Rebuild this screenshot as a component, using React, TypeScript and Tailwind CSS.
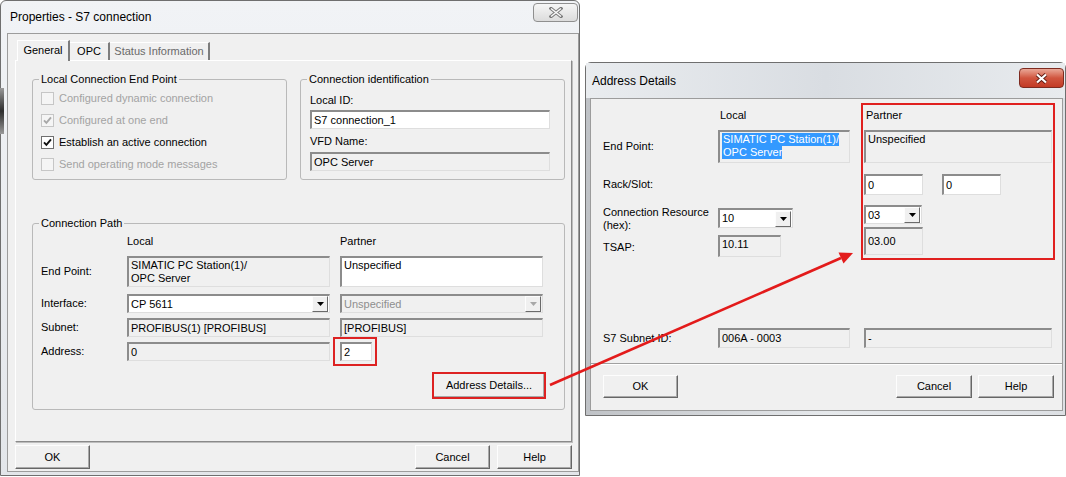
import React from 'react'

type BoxProps = { children?: React.ReactNode; className?: string }

// sunken edit / static field
function Field({ children, className = '', white = false }: BoxProps & { white?: boolean }) {
  return (
    <div
      className={`border-t-2 border-l-2 border-r border-b border-t-[#8c8c8c] border-l-[#8c8c8c] border-r-[#dedede] border-b-[#dedede] pl-[2px] leading-[13px] whitespace-nowrap overflow-hidden ${
        white ? 'bg-white' : 'bg-[#f0f0f0]'
      } ${className}`}
    >
      {children}
    </div>
  )
}

function Btn({ children, className = '' }: BoxProps) {
  return (
    <div
      className={`flex items-center justify-center bg-[#f0f0f0] border border-t-[#fdfdfd] border-l-[#fdfdfd] border-r-[#666666] border-b-[#666666] shadow-[inset_-1px_-1px_0_#a9a9a9] ${className}`}
    >
      {children}
    </div>
  )
}

function DropArrow({ disabled = false }: { disabled?: boolean }) {
  return (
    <div className="w-[16px] h-[16px] shrink-0 flex items-center justify-center bg-[#f0f0f0] border border-t-[#fdfdfd] border-l-[#fdfdfd] border-r-[#6a6a6a] border-b-[#6a6a6a]">
      <svg width="7" height="4" viewBox="0 0 7 4">
        <path d="M0 0H7L3.5 4Z" fill={disabled ? '#a8a8a8' : '#000'} />
      </svg>
    </div>
  )
}

function Combo({ value, className = '', disabled = false }: { value: string; className?: string; disabled?: boolean }) {
  return (
    <Field white={!disabled} className={`flex items-center pr-[1px] ${className}`}>
      <span className={`flex-1 ${disabled ? 'text-[#8e8e8e]' : ''}`}>{value}</span>
      <DropArrow disabled={disabled} />
    </Field>
  )
}

function Check({ label, checked = false, disabled = false }: { label: string; checked?: boolean; disabled?: boolean }) {
  return (
    <div className="flex items-center h-[22px]">
      <span
        className={`w-[13px] h-[13px] border flex items-center justify-center ${
          disabled ? 'border-[#c6c6c6] bg-[#f5f5f5]' : 'border-[#6f6f6f] bg-white'
        }`}
      >
        {checked && (
          <svg width="9" height="9" viewBox="0 0 9 9">
            <path d="M1 4.3L3.4 6.8L8 1.4" fill="none" stroke={disabled ? '#a8a8a8' : '#111'} strokeWidth="1.9" />
          </svg>
        )}
      </span>
      <span className={`ml-[5px] ${disabled ? 'text-[#a3a3a3]' : 'text-black'}`}>{label}</span>
    </div>
  )
}

function Group({ title, children, className = '' }: BoxProps & { title: string }) {
  return (
    <fieldset className={`border border-[#b9b9b9] rounded-[3px] ${className}`}>
      <legend className="ml-[6px] px-[2px] leading-[13px]">{title}</legend>
      {children}
    </fieldset>
  )
}

function GreyClose() {
  return (
    <div className="mt-[2px] mr-[1px] w-[45px] h-[19px] rounded-[4px] border border-[#8f8f8f] bg-linear-to-b from-[#f6f6f6] to-[#dcdcdc] flex items-center justify-center">
      <svg width="14" height="11" viewBox="0 0 14 11">
        <path d="M2 1.5L12 9.5M12 1.5L2 9.5" stroke="#7a7a7a" strokeWidth="3.4" strokeLinecap="square" />
        <path d="M2 1.5L12 9.5M12 1.5L2 9.5" stroke="#fafafa" strokeWidth="1.5" />
      </svg>
    </div>
  )
}

function RedClose() {
  return (
    <div className="mt-[5px] mr-[1px] w-[45px] h-[20px] rounded-[4px] border border-[#7e2b20] bg-linear-to-b from-[#e9a797] via-[#d0553f] to-[#c33a25] flex items-center justify-center">
      <svg width="13" height="11" viewBox="0 0 13 11">
        <path d="M2 1.5L11 9.5M11 1.5L2 9.5" stroke="#5d1b12" strokeWidth="3.8" />
        <path d="M2 1.5L11 9.5M11 1.5L2 9.5" stroke="#ffffff" strokeWidth="2.2" />
      </svg>
    </div>
  )
}

function PropertiesWindow() {
  return (
    <div className="absolute left-0 top-0 w-[580px] h-[476px] rounded-t-[6px] border border-[#6f6f6f] bg-linear-to-b from-[#f1f3f6] to-[#e3e6ea] flex flex-col">
      <div className="h-[32px] shrink-0 flex items-start justify-between">
        <span className="pl-[9px] pt-[9px] text-[12px] leading-[14px]">Properties - S7 connection</span>
        <GreyClose />
      </div>

      <div className="ml-[6px] h-[439px] border border-[#9c9c9c] bg-[#f0f0f0] flex flex-col">
        {/* tabs */}
        <div className="mt-[6px] h-[21px] flex items-end pl-[9px]">
          <div className="relative z-10 w-[53px] h-[21px] bg-[#f0f0f0] border-t border-l border-t-white border-l-white border-r-2 border-r-[#7d7d7d] flex items-center justify-center pb-[2px]">
            General
          </div>
          <div className="w-[40px] h-[19px] border-t border-t-white border-r-2 border-r-[#7d7d7d] flex items-center justify-center pb-[1px]">
            OPC
          </div>
          <div className="w-[100px] h-[19px] border-t border-t-white border-r-2 border-r-[#7d7d7d] flex items-center justify-center pb-[1px] text-[#6a6a6a]">
            Status Information
          </div>
        </div>

        {/* tab page */}
        <div className="-mt-[1px] ml-[7px] mr-[6px] h-[382px] border border-t-white border-l-white border-r-[#8a8a8a] border-b-[#8a8a8a] shadow-[1px_1px_0_#bdbdbd] flex flex-col">
          <div className="mt-[12px] flex">
            <Group title="Local Connection End Point" className="ml-[16px] w-[255px] h-[107px]">
              <div className="mt-[1px] pl-[8px] flex flex-col">
                <Check label="Configured dynamic connection" disabled />
                <Check label="Configured at one end" checked disabled />
                <Check label="Establish an active connection" checked />
                <Check label="Send operating mode messages" disabled />
              </div>
            </Group>
            <Group title="Connection identification" className="ml-[13px] w-[265px] h-[107px]">
              <div className="pl-[9px] flex flex-col">
                <span className="mt-[7px] h-[14px] leading-[14px]">Local ID:</span>
                <Field white className="mt-[3px] w-[240px] h-[19px] flex items-center">
                  S7 connection_1
                </Field>
                <span className="mt-[5px] h-[14px] leading-[14px]">VFD Name:</span>
                <Field className="mt-[4px] w-[240px] h-[19px] flex items-center">OPC Server</Field>
              </div>
            </Group>
          </div>

          <Group title="Connection Path" className="mt-[37px] ml-[16px] w-[533px] h-[193px]">
            <div className="pl-[8px] flex flex-col">
              <div className="mt-[4px] h-[14px] flex items-center">
                <span className="w-[86px]" />
                <span className="w-[213px]">Local</span>
                <span>Partner</span>
              </div>
              <div className="mt-[8px] h-[31px] flex">
                <span className="w-[86px] self-center">End Point:</span>
                <Field className="w-[203px] h-full pt-[1px]">
                  SIMATIC PC Station(1)/
                  <br />
                  OPC Server
                </Field>
                <Field white className="ml-[10px] w-[203px] h-full pt-[1px]">
                  Unspecified
                </Field>
              </div>
              <div className="mt-[7px] h-[19px] flex">
                <span className="w-[86px] self-center">Interface:</span>
                <Combo value="CP 5611" className="w-[203px] h-full" />
                <Combo value="Unspecified" disabled className="ml-[10px] w-[203px] h-full" />
              </div>
              <div className="mt-[5px] h-[19px] flex">
                <span className="w-[86px] self-center">Subnet:</span>
                <Field className="w-[203px] h-full flex items-center">PROFIBUS(1) [PROFIBUS]</Field>
                <Field className="ml-[10px] w-[203px] h-full flex items-center">[PROFIBUS]</Field>
              </div>
              <div className="mt-[5px] h-[19px] flex">
                <span className="w-[86px] self-center">Address:</span>
                <Field className="w-[203px] h-full flex items-center">0</Field>
                <div className="relative ml-[10px] w-[32px] h-full">
                  <Field white className="w-full h-full flex items-center">
                    2
                  </Field>
                  <div className="absolute -left-[7px] -top-[5px] w-[44px] h-[29px] border-2 border-[#dd2222]" />
                </div>
              </div>
              <div className="mt-[12px] h-[25px] flex justify-end pr-[19px]">
                <div className="relative w-[112px] h-full">
                  <Btn className="w-full h-full">Address Details...</Btn>
                  <div className="absolute -inset-[1px] border-2 border-[#dd2222]" />
                </div>
              </div>
            </div>
          </Group>
        </div>

        <div className="mt-[3px] h-[24px] flex pl-[7px] pr-[6px]">
          <Btn className="w-[75px] h-full">OK</Btn>
          <Btn className="ml-auto w-[75px] h-full">Cancel</Btn>
          <Btn className="ml-[7px] w-[75px] h-full">Help</Btn>
        </div>
      </div>
    </div>
  )
}

function AddressWindow() {
  return (
    <div className="absolute left-[585px] top-[62px] w-[481px] h-[354px] rounded-t-[6px] border border-[#6f6f6f] bg-linear-to-r from-[#bfc2c6] via-[#e6e9ec] to-[#dde0e4] flex flex-col">
      <div className="h-[35px] shrink-0 flex items-start justify-between bg-linear-to-r from-[#e9ecef] via-[#d9dde2] to-[#e8ebee]">
        <span className="pl-[6px] pt-[11px] text-[12px] leading-[14px]">Address Details</span>
        <RedClose />
      </div>

      <div className="relative ml-[4px] mr-[2px] h-[313px] border border-[#9c9c9c] bg-[#f0f0f0] flex flex-col">
        <div className="mt-[9px] h-[14px] flex items-center pl-[12px]">
          <span className="w-[115px]" />
          <span className="w-[146px] pl-[2px]">Local</span>
          <span className="pl-[2px]">Partner</span>
        </div>

        <div className="mt-[8px] h-[33px] flex pl-[12px]">
          <span className="w-[115px] self-center">End Point:</span>
          <Field className="w-[132px] h-full pt-[1px] pl-[1px]">
            <span className="block w-fit bg-[#3399ff] text-white pl-[1px]">SIMATIC PC Station(1)/</span>
            <span className="block w-fit bg-[#3399ff] text-white pl-[1px]">OPC Server</span>
          </Field>
          <Field className="ml-[14px] w-[188px] h-full pt-[1px]">Unspecified</Field>
        </div>

        <div className="mt-[11px] h-[21px] flex pl-[12px]">
          <span className="w-[115px] self-center">Rack/Slot:</span>
          <span className="w-[146px]" />
          <Field white className="w-[59px] h-full flex items-center">0</Field>
          <Field white className="ml-[19px] w-[59px] h-full flex items-center">0</Field>
        </div>

        <div className="mt-[10px] h-[22px] flex items-start pl-[12px]">
          <span className="w-[115px] pt-[1px] leading-[13px]">
            Connection Resource
            <br />
            (hex):
          </span>
          <div className="w-[146px]">
            <Combo value="10" className="mt-[3px] w-[75px] h-[20px]" />
          </div>
          <Combo value="03" className="w-[58px] h-[19px]" />
        </div>

        <div className="h-[30px] flex items-start pl-[12px]">
          <span className="w-[115px] mt-[14px]">TSAP:</span>
          <div className="w-[146px]">
            <Field className="mt-[8px] w-[63px] h-[22px] pt-[1px]">10.11</Field>
          </div>
          <Field className="w-[59px] h-[28px] flex items-center">03.00</Field>
        </div>

        <div className="mt-[71px] h-[20px] flex pl-[12px]">
          <span className="w-[115px] self-center">S7 Subnet ID:</span>
          <Field className="w-[132px] h-full flex items-center">006A - 0003</Field>
          <Field className="ml-[14px] w-[188px] h-full flex items-center">-</Field>
        </div>

        <div className="mt-[15px] h-[2px] border-t border-t-[#a0a0a0] border-b border-b-white" />

        <div className="mt-[10px] h-[23px] flex pl-[12px] pr-[8px]">
          <Btn className="w-[75px] h-full">OK</Btn>
          <Btn className="ml-auto w-[76px] h-full">Cancel</Btn>
          <Btn className="ml-[6px] w-[76px] h-full">Help</Btn>
        </div>

        {/* annotation box round the partner column */}
        <div className="absolute left-[270px] top-[4px] w-[194px] h-[157px] border-2 border-[#e0201f]" />
      </div>
    </div>
  )
}

export default function App() {
  return (
    <div className="relative w-[1066px] h-[477px] overflow-hidden bg-white text-black text-[11px] leading-[13px] font-['Liberation_Sans',Arial,sans-serif]">
      <PropertiesWindow />
      {/* dark shadow stripe on the left frame edge */}
      <div className="absolute left-0 top-[88px] w-[4px] h-[46px] bg-linear-to-b from-[#9a9a9a] via-[#2e2e2e] to-[#9a9a9a]" />
      <AddressWindow />
      <svg className="absolute left-0 top-0 pointer-events-none" width="1066" height="477" viewBox="0 0 1066 477">
        <line x1="550" y1="385" x2="841" y2="258" stroke="#e31b1b" strokeWidth="2.6" />
        <polygon points="853,253 843.5,263.5 838.5,252.5" fill="#e31b1b" />
      </svg>
    </div>
  )
}
